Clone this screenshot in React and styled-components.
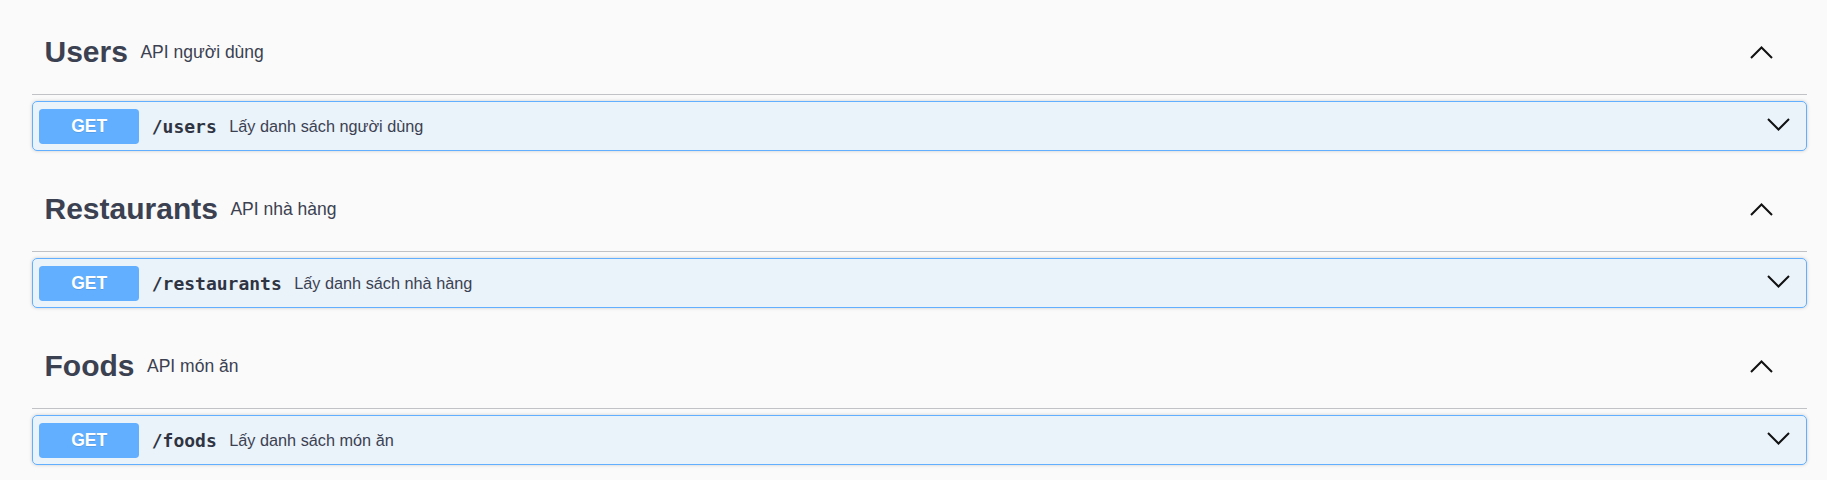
import React from 'react';
import styled, { createGlobalStyle } from 'styled-components';

const GlobalStyle = createGlobalStyle`
  html, body {
    margin: 0;
    padding: 0;
    background: #fafafa;
  }
  body {
    font-family: "Liberation Sans", Arial, sans-serif;
  }
`;

const Page = styled.div`
  padding: 12.5px 20px 0 32px;
  background: #fafafa;
  color: #3b4151;
`;

const TagSection = styled.section`
  display: flex;
  flex-direction: column;
`;

const TagHeader = styled.h3`
  display: flex;
  align-items: center;
  box-sizing: content-box;
  height: 40px;
  margin: 0 0 6.25px;
  padding: 19.5px 25px 22px 12.5px;
  border-bottom: 1px solid rgba(59, 65, 81, 0.3);
  font-size: 30px;
  font-weight: 700;
  color: #3b4151;
`;

const TagName = styled.span`
  line-height: 1;
`;

const TagNote = styled.small`
  flex: 1;
  padding: 0 12.5px;
  font-size: 17.5px;
  font-weight: 400;
  color: #3b4151;
`;

const ToggleButton = styled.button`
  display: flex;
  align-items: center;
  background: none;
  border: none;
  padding: 0 ${(p) => p.$right}px ${(p) => p.$lift || 0}px 0;
  cursor: pointer;
`;

const Opblock = styled.div`
  margin: 0 0 18.75px;
  border: 1px solid #61affe;
  border-radius: 5px;
  background: rgba(97, 175, 254, 0.1);
  box-shadow: 0 0 3.75px rgba(0, 0, 0, 0.19);
`;

const Summary = styled.div`
  display: flex;
  align-items: center;
  padding: 6.25px;
`;

const Method = styled.span`
  min-width: 100px;
  padding: 7.5px 0;
  border-radius: 3.75px;
  background: #61affe;
  color: #fff;
  font-size: 17.5px;
  font-weight: 700;
  line-height: 20px;
  text-align: center;
  text-shadow: 0 1px 0 rgba(0, 0, 0, 0.1);
`;

const Path = styled.span`
  padding: 0 12.5px;
  font-family: "DejaVu Sans Mono", "Liberation Mono", monospace;
  font-size: 18px;
  font-weight: 700;
  color: #2f3442;
`;

const Desc = styled.span`
  flex: 1;
  font-size: 16.25px;
  color: #3b4151;
`;

const Chevron = ({ up }) => (
  <svg width="23" height="13" viewBox="0 0 23 13" fill="none">
    <polyline
      points={up ? '1,12 11.5,1.5 22,12' : '1,1 11.5,11.5 22,1'}
      stroke="#111"
      strokeWidth="2"
    />
  </svg>
);

const tags = [
  { name: 'Users', note: 'API người dùng', path: '/users', desc: 'Lấy danh sách người dùng' },
  { name: 'Restaurants', note: 'API nhà hàng', path: '/restaurants', desc: 'Lấy danh sách nhà hàng' },
  { name: 'Foods', note: 'API món ăn', path: '/foods', desc: 'Lấy danh sách món ăn' },
];

export default function App() {
  return (
    <>
      <GlobalStyle />
      <Page>
        {tags.map((t) => (
          <TagSection key={t.name}>
            <TagHeader>
              <TagName>{t.name}</TagName>
              <TagNote>{t.note}</TagNote>
              <ToggleButton $right={9}>
                <Chevron up />
              </ToggleButton>
            </TagHeader>
            <Opblock>
              <Summary>
                <Method>GET</Method>
                <Path>{t.path}</Path>
                <Desc>{t.desc}</Desc>
                <ToggleButton $right={10} $lift={4}>
                  <Chevron />
                </ToggleButton>
              </Summary>
            </Opblock>
          </TagSection>
        ))}
      </Page>
    </>
  );
}
